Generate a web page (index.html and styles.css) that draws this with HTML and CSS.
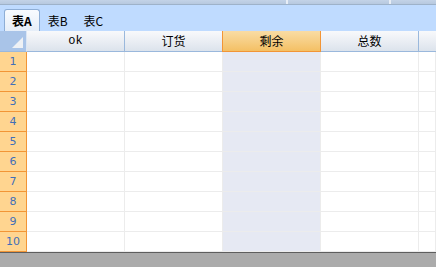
FILE: index.html
```html
<!DOCTYPE html>
<html lang="zh">
<head>
    <meta charset="UTF-8">
    <title>表格</title>
    <link rel="stylesheet" href="styles.css">
</head>
<body>
    <div class="topbar">
        <div class="seg seg-wide"></div>
        <div class="seg seg-mid"></div>
        <div class="seg seg-end"></div>
    </div>

    <div class="tabs">
        <div class="tab active">表A</div>
        <div class="tab">表B</div>
        <div class="tab">表C</div>
    </div>

    <div class="sheet">
        <div class="corner"><span class="tri"></span></div>
        <div class="colhead mono">ok</div>
        <div class="colhead">订货</div>
        <div class="colhead selected">剩余</div>
        <div class="colhead">总数</div>
        <div class="colhead last"></div>

        <!-- 10 rows -->
        <div class="rowhead">1</div><div class="cell"></div><div class="cell"></div><div class="cell sel"></div><div class="cell"></div><div class="cell"></div>
        <div class="rowhead">2</div><div class="cell"></div><div class="cell"></div><div class="cell sel"></div><div class="cell"></div><div class="cell"></div>
        <div class="rowhead">3</div><div class="cell"></div><div class="cell"></div><div class="cell sel"></div><div class="cell"></div><div class="cell"></div>
        <div class="rowhead">4</div><div class="cell"></div><div class="cell"></div><div class="cell sel"></div><div class="cell"></div><div class="cell"></div>
        <div class="rowhead">5</div><div class="cell"></div><div class="cell"></div><div class="cell sel"></div><div class="cell"></div><div class="cell"></div>
        <div class="rowhead">6</div><div class="cell"></div><div class="cell"></div><div class="cell sel"></div><div class="cell"></div><div class="cell"></div>
        <div class="rowhead">7</div><div class="cell"></div><div class="cell"></div><div class="cell sel"></div><div class="cell"></div><div class="cell"></div>
        <div class="rowhead">8</div><div class="cell"></div><div class="cell"></div><div class="cell sel"></div><div class="cell"></div><div class="cell"></div>
        <div class="rowhead">9</div><div class="cell"></div><div class="cell"></div><div class="cell sel"></div><div class="cell"></div><div class="cell"></div>
        <div class="rowhead">10</div><div class="cell"></div><div class="cell"></div><div class="cell sel"></div><div class="cell"></div><div class="cell"></div>
    </div>

    <div class="footer"></div>
</body>
</html>
```

FILE: styles.css
```css
body {
    margin: 0;
    padding: 0;
    width: 436px;
    height: 267px;
    overflow: hidden;
    font-family: "Noto Sans CJK SC", "DejaVu Sans", sans-serif;
    font-size: 12px;
    color: #000;
    background-color: #ababab;
    display: flex;
    flex-direction: column;
}

/* Top strip */
.topbar {
    height: 4px;
    display: flex;
    gap: 2px;
    background-color: #e8eef6;
    border-bottom: 1px solid #9eb2c9;
}

.seg {
    background: linear-gradient(180deg, #c3d3e7 0%, #b7c9df 100%);
}

.seg-wide {
    width: 286px;
}

.seg-mid {
    width: 101px;
}

.seg-end {
    flex: 1;
}

/* Tabs */
.tabs {
    height: 26px;
    background-color: #bfdbff;
    display: flex;
    align-items: flex-end;
    padding-left: 4px;
    box-sizing: border-box;
}

.tab {
    height: 21px;
    line-height: 21px;
    padding: 0 8px;
    font-family: "Noto Sans CJK SC", "DejaVu Sans Mono", monospace;
    font-size: 12px;
}

.tab.active {
    font-weight: bold;
    background: linear-gradient(180deg, #f8fbff 0%, #e6eef8 100%);
    border: 1px solid #8eaed6;
    border-bottom: none;
    border-radius: 3px 3px 0 0;
    padding: 0 7px;
}

/* Grid */
.sheet {
    display: grid;
    grid-template-columns: 27px 98px 98px 98px 98px 1fr;
    grid-template-rows: 21px repeat(10, 20px);
    background-color: #fff;
    border-bottom: 1px solid #5e5e5e;
}

.corner {
    background-color: #a9c4e8;
    border-right: 1px solid #dbe6f4;
    border-bottom: 1px solid #9ab8dc;
    position: relative;
}

.tri {
    position: absolute;
    right: 3px;
    bottom: 3px;
    width: 0;
    height: 0;
    border-left: 11px solid transparent;
    border-bottom: 11px solid #eef1f5;
}

.colhead {
    background: linear-gradient(180deg, #f8f9fb 0%, #e9edf3 55%, #dce3ec 100%);
    border-right: 1px solid #9ab8dc;
    border-bottom: 1px solid #9ab8dc;
    text-align: center;
    line-height: 20px;
    font-size: 12px;
}

.colhead.mono {
    font-family: "Liberation Mono", monospace;
}

.colhead.selected {
    background: linear-gradient(180deg, #f9dca4 0%, #f6cd82 55%, #f4c064 100%);
    border-right-color: #f29536;
    border-bottom-color: #f29536;
    border-left: 1px solid #f29536;
    margin-left: -1px;
}

.colhead.last {
    border-right: none;
}

.rowhead {
    background-color: #ffd590;
    border-right: 1px solid #f29536;
    border-bottom: 1px solid #f29536;
    color: #3f6fb8;
    text-align: center;
    line-height: 19px;
    font-family: "DejaVu Sans", sans-serif;
    font-size: 11px;
}

.cell {
    border-right: 1px solid #ececec;
    border-bottom: 1px solid #ececec;
}

.cell.sel {
    background-color: #e6e9f3;
}

.footer {
    flex: 1;
    background-color: #ababab;
}
```
